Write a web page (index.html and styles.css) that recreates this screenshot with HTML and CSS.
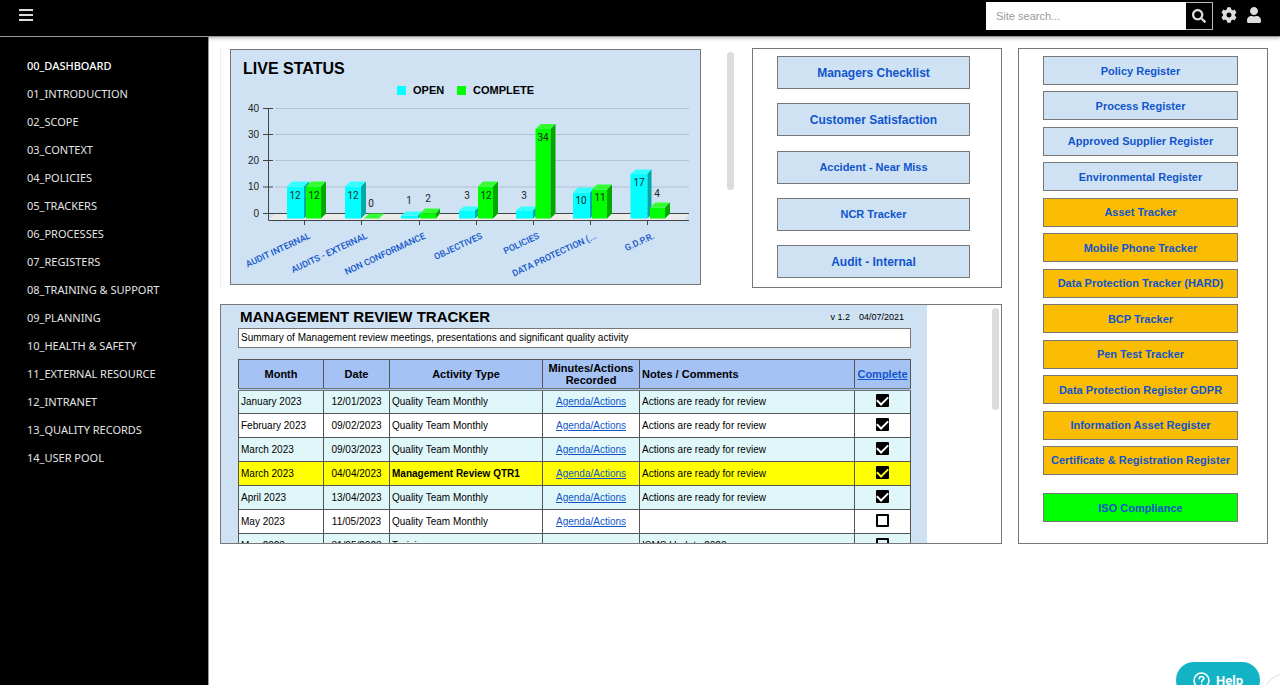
FILE: index.html
```html
<!DOCTYPE html>
<html lang="en">
<head>
<meta charset="utf-8">
<title>Dashboard</title>
<link rel="stylesheet" href="styles.css">
</head>
<body>
<header class="topbar">
  <button class="menu-btn" type="button" aria-label="Menu">
    <svg width="14" height="12" viewBox="0 0 14 12"><path d="M0 0h14v2H0zM0 5h14v2H0zM0 10h14v2H0z"/></svg>
  </button>
  <form class="search">
    <input class="search-input" type="search" placeholder="Site search..." aria-label="Site search">
    <button class="search-btn" type="button" aria-label="Search">
      <svg width="14" height="14" viewBox="0 0 512 512"><path d="M505 442.700 405.300 343c-4.500-4.500-10.600-7-17-7H372c27.600-35.300 44-79.700 44-128C416 93.100 322.900 0 208 0S0 93.100 0 208s93.100 208 208 208c48.300 0 92.700-16.400 128-44v16.300c0 6.400 2.500 12.500 7 17l99.700 99.700c9.400 9.400 24.600 9.400 33.900 0l28.300-28.300c9.400-9.400 9.400-24.600.1-34zM208 336c-70.700 0-128-57.200-128-128 0-70.700 57.200-128 128-128 70.700 0 128 57.200 128 128 0 70.700-57.200 128-128 128z"/></svg>
    </button>
  </form>
  <button class="icon-btn" type="button" aria-label="Settings">
    <svg width="16" height="16" viewBox="0 0 512 512"><path d="M487.400 315.700l-42.600-24.600c4.300-23.200 4.300-47 0-70.200l42.600-24.600c4.900-2.800 7.100-8.600 5.500-14-11.100-35.600-30-67.800-54.700-94.600-3.800-4.100-10-5.100-14.800-2.300L380.800 110c-17.900-15.400-38.500-27.300-60.800-35.100V25.800c0-5.600-3.900-10.500-9.400-11.700-36.700-8.200-74.300-7.800-109.200 0-5.500 1.200-9.400 6.100-9.400 11.700V75c-22.200 7.900-42.800 19.800-60.800 35.100L88.700 85.500c-4.900-2.800-11-1.900-14.800 2.300-24.700 26.700-43.600 58.900-54.700 94.600-1.700 5.400.6 11.200 5.500 14L67.300 221c-4.300 23.200-4.300 47 0 70.200l-42.600 24.600c-4.900 2.800-7.100 8.600-5.500 14 11.100 35.600 30 67.800 54.700 94.600 3.800 4.100 10 5.100 14.800 2.300l42.600-24.600c17.900 15.400 38.500 27.300 60.800 35.100v49.200c0 5.600 3.900 10.500 9.400 11.700 36.700 8.200 74.300 7.800 109.200 0 5.500-1.200 9.400-6.100 9.400-11.700v-49.200c22.200-7.900 42.800-19.800 60.800-35.100l42.600 24.600c4.900 2.800 11 1.900 14.800-2.300 24.700-26.700 43.600-58.900 54.700-94.600 1.500-5.500-.7-11.300-5.600-14.100zM256 336c-44.100 0-80-35.900-80-80s35.900-80 80-80 80 35.900 80 80-35.900 80-80 80z"/></svg>
  </button>
  <button class="icon-btn" type="button" aria-label="Account">
    <svg width="14" height="16" viewBox="0 0 448 512"><path d="M224 256c70.700 0 128-57.300 128-128S294.700 0 224 0 96 57.300 96 128s57.300 128 128 128zm89.600 32h-16.700c-22.200 10.200-46.900 16-72.900 16s-50.600-5.800-72.900-16h-16.700C60.200 288 0 348.200 0 422.400V464c0 26.500 21.500 48 48 48h352c26.500 0 48-21.500 48-48v-41.600c0-74.200-60.200-134.400-134.400-134.400z"/></svg>
  </button>
</header>

<div class="page">
  <nav class="sidebar">
    <a class="nav-link active" href="#">00_DASHBOARD</a>
    <a class="nav-link" href="#">01_INTRODUCTION</a>
    <a class="nav-link" href="#">02_SCOPE</a>
    <a class="nav-link" href="#">03_CONTEXT</a>
    <a class="nav-link" href="#">04_POLICIES</a>
    <a class="nav-link" href="#">05_TRACKERS</a>
    <a class="nav-link" href="#">06_PROCESSES</a>
    <a class="nav-link" href="#">07_REGISTERS</a>
    <a class="nav-link" href="#">08_TRAINING &amp; SUPPORT</a>
    <a class="nav-link" href="#">09_PLANNING</a>
    <a class="nav-link" href="#">10_HEALTH &amp; SAFETY</a>
    <a class="nav-link" href="#">11_EXTERNAL RESOURCE</a>
    <a class="nav-link" href="#">12_INTRANET</a>
    <a class="nav-link" href="#">13_QUALITY RECORDS</a>
    <a class="nav-link" href="#">14_USER POOL</a>
  </nav>

  <main class="main">
    <div class="board">
      <div class="board-top">
        <section class="chart-frame" aria-label="Live status">
          <svg class="chart" viewBox="230 48 471 237">
            <rect class="chart-bg" x="230.5" y="49.500" width="470" height="235"/>
            <text class="chart-title" x="243" y="74">LIVE STATUS</text>
            <rect class="open" x="397" y="86" width="9" height="9"/>
            <text class="legend" x="413" y="94">OPEN</text>
            <rect class="done" x="457" y="86" width="9" height="9"/>
            <text class="legend" x="473" y="94">COMPLETE</text>

            <path class="grid-line" d="M275 108.500H689M275 134.500H689M275 160.500H689M275 187H689"/>
            <path class="floor" d="M269 220l7-6.500h413l-5 6.500z"/>
            <path class="axis" d="M268.500 108v112.500H689M263 108.500h10M263 134.500h10M263 160.500h10M263 187h10M263 213.500H689"/>
            <path class="axis" d="M304.500 220v5M361.500 220v5M419.500 220v5M476.500 220v5M533.500 220v5M590.500 220v5M647.500 220v5"/>
            <g class="scale">
              <text x="259" y="112">40</text><text x="259" y="138">30</text><text x="259" y="164">20</text><text x="259" y="190">10</text><text x="259" y="217">0</text>
            </g>

            <g transform="translate(287 218.500)"><path class="open" d="M0 0v-32h17V0z"/><path class="open-top" d="M0-32l5-5h17l-5 5z"/><path class="open-side" d="M17-32l5-5v32l-5 5z"/></g>
            <g transform="translate(306 218.500)"><path class="done" d="M0 0v-32h15V0z"/><path class="done-top" d="M0-32l5-5h15l-5 5z"/><path class="done-side" d="M15-32l5-5v32l-5 5z"/></g>
            <g transform="translate(345 218.500)"><path class="open" d="M0 0v-32h16V0z"/><path class="open-top" d="M0-32l5-5h16l-5 5z"/><path class="open-side" d="M16-32l5-5v32l-5 5z"/></g>
            <g transform="translate(364 218.500)"><path class="done-top" d="M0 0l5-5h15l-5 5z"/></g>
            <g transform="translate(401 218.500)"><path class="open" d="M0 0v-3h17V0z"/><path class="open-top" d="M0-3l5-4h17l-5 4z"/><path class="open-side" d="M17-3l5-4v3l-5 4z"/></g>
            <g transform="translate(420 218.500)"><path class="done" d="M0 0v-5h16V0z"/><path class="done-top" d="M0-5l5-5h15l-4 5z"/><path class="done-side" d="M16-5l4-5v5l-4 5z"/></g>
            <g transform="translate(459 218.500)"><path class="open" d="M0 0v-8h16V0z"/><path class="open-top" d="M0-8l5-4h16l-5 4z"/><path class="open-side" d="M16-8l5-4v8l-5 4z"/></g>
            <g transform="translate(478 218.500)"><path class="done" d="M0 0v-32h15V0z"/><path class="done-top" d="M0-32l5-5h15l-5 5z"/><path class="done-side" d="M15-32l5-5v32l-5 5z"/></g>
            <g transform="translate(516 218.500)"><path class="open" d="M0 0v-8h17V0z"/><path class="open-top" d="M0-8l5-4h17l-5 4z"/><path class="open-side" d="M17-8l5-4v8l-5 4z"/></g>
            <g transform="translate(535.500 218.500)"><path class="done" d="M0 0v-89.500h15V0z"/><path class="done-top" d="M0-89.500l5-5h15l-5 5z"/><path class="done-side" d="M15-89.500l5-5v89.500l-5 5z"/></g>
            <g transform="translate(573 218.500)"><path class="open" d="M0 0v-26h17V0z"/><path class="open-top" d="M0-26l5-5h17l-5 5z"/><path class="open-side" d="M17-26l5-5v26l-5 5z"/></g>
            <g transform="translate(592 218.500)"><path class="done" d="M0 0v-29h15V0z"/><path class="done-top" d="M0-29l5-5h15l-5 5z"/><path class="done-side" d="M15-29l5-5v29l-5 5z"/></g>
            <g transform="translate(630.500 218.500)"><path class="open" d="M0 0v-44.500h17V0z"/><path class="open-top" d="M0-44.500l5-4.500h17l-5 4.500z"/><path class="open-side" d="M17-44.500l4-4.500v44.500l-4 4.500z"/></g>
            <g transform="translate(650 218.500)"><path class="done" d="M0 0v-11h15V0z"/><path class="done-top" d="M0-11l5-5h15l-5 5z"/><path class="done-side" d="M15-11l5-5v11l-5 5z"/></g>

            <g class="value">
              <text x="295" y="199">12</text><text x="314" y="199">12</text>
              <text x="353" y="199">12</text><text x="371" y="207">0</text>
              <text x="409" y="204">1</text><text x="428" y="202">2</text>
              <text x="467" y="199">3</text><text x="486" y="199">12</text>
              <text x="524" y="199">3</text><text x="543" y="141">34</text>
              <text x="581" y="204">10</text><text x="600" y="201">11</text>
              <text x="639" y="186">17</text><text x="657" y="197">4</text>
            </g>
            <g class="category">
              <text transform="translate(311 238) rotate(-25)">AUDIT INTERNAL</text>
              <text transform="translate(368 238) rotate(-25)">AUDITS - EXTERNAL</text>
              <text transform="translate(426 238) rotate(-25)">NON CONFORMANCE</text>
              <text transform="translate(483 238) rotate(-25)">OBJECTIVES</text>
              <text transform="translate(540 238) rotate(-25)">POLICIES</text>
              <text transform="translate(597 238) rotate(-25)">DATA PROTECTION (...</text>
              <text transform="translate(655 238) rotate(-25)">G.D.P.R.</text>
            </g>
          </svg>
          <div class="thumb thumb-tall"></div>
        </section>

        <section class="panel quick-panel">
          <button class="tile tall large" type="button">Managers Checklist</button>
          <button class="tile tall large" type="button">Customer Satisfaction</button>
          <button class="tile tall" type="button">Accident - Near Miss</button>
          <button class="tile tall" type="button">NCR Tracker</button>
          <button class="tile tall large" type="button">Audit - Internal</button>
        </section>
      </div>

      <section class="panel tracker">
        <div class="sheet">
          <div class="sheet-head">
            <h2 class="sheet-title">MANAGEMENT REVIEW TRACKER</h2>
            <span>v 1.2</span>
            <span>04/07/2021</span>
          </div>
          <p class="summary">Summary of Management review meetings, presentations and significant quality activity</p>
          <table class="reviews">
            <colgroup><col class="c-month"><col class="c-date"><col class="c-activity"><col class="c-minutes"><col><col class="c-done"></colgroup>
            <thead>
              <tr><th>Month</th><th>Date</th><th>Activity Type</th><th>Minutes/Actions Recorded</th><th class="left">Notes / Comments</th><th><a href="#">Complete</a></th></tr>
            </thead>
            <tbody>
              <tr class="tint"><td>January 2023</td><td class="mid">12/01/2023</td><td>Quality Team Monthly</td><td class="mid"><a href="#">Agenda/Actions</a></td><td>Actions are ready for review</td><td class="mid"><input class="tick" type="checkbox" aria-label="January 2023 complete" checked></td></tr>
              <tr><td>February 2023</td><td class="mid">09/02/2023</td><td>Quality Team Monthly</td><td class="mid"><a href="#">Agenda/Actions</a></td><td>Actions are ready for review</td><td class="mid"><input class="tick" type="checkbox" aria-label="February 2023 complete" checked></td></tr>
              <tr class="tint"><td>March 2023</td><td class="mid">09/03/2023</td><td>Quality Team Monthly</td><td class="mid"><a href="#">Agenda/Actions</a></td><td>Actions are ready for review</td><td class="mid"><input class="tick" type="checkbox" aria-label="March 2023 complete" checked></td></tr>
              <tr class="flag"><td>March 2023</td><td class="mid">04/04/2023</td><td><strong>Management Review QTR1</strong></td><td class="mid"><a href="#">Agenda/Actions</a></td><td>Actions are ready for review</td><td class="mid"><input class="tick" type="checkbox" aria-label="Management Review QTR1 complete" checked></td></tr>
              <tr class="tint"><td>April 2023</td><td class="mid">13/04/2023</td><td>Quality Team Monthly</td><td class="mid"><a href="#">Agenda/Actions</a></td><td>Actions are ready for review</td><td class="mid"><input class="tick" type="checkbox" aria-label="April 2023 complete" checked></td></tr>
              <tr><td>May 2023</td><td class="mid">11/05/2023</td><td>Quality Team Monthly</td><td class="mid"><a href="#">Agenda/Actions</a></td><td></td><td class="mid"><input class="tick" type="checkbox" aria-label="May 2023 complete"></td></tr>
              <tr class="tint"><td>May 2023</td><td class="mid">31/05/2023</td><td>Training</td><td></td><td>ISMS Update 2023</td><td class="mid"><input class="tick" type="checkbox" aria-label="Training complete"></td></tr>
            </tbody>
          </table>
        </div>
        <div class="thumb thumb-short"></div>
      </section>
    </div>

    <aside class="panel registers">
      <div class="register-list">
        <button class="tile" type="button">Policy Register</button>
        <button class="tile" type="button">Process Register</button>
        <button class="tile" type="button">Approved Supplier Register</button>
        <button class="tile" type="button">Environmental Register</button>
        <button class="tile amber" type="button">Asset Tracker</button>
        <button class="tile amber" type="button">Mobile Phone Tracker</button>
        <button class="tile amber" type="button">Data Protection Tracker (HARD)</button>
        <button class="tile amber" type="button">BCP Tracker</button>
        <button class="tile amber" type="button">Pen Test Tracker</button>
        <button class="tile amber" type="button">Data Protection Register GDPR</button>
        <button class="tile amber" type="button">Information Asset Register</button>
        <button class="tile amber" type="button">Certificate &amp; Registration Register</button>
      </div>
      <button class="tile green" type="button">ISO Compliance</button>
    </aside>
  </main>
</div>

<div class="info-dot"></div>
<button class="help" type="button">
  <svg width="17" height="17" viewBox="0 0 17 17" fill="none" stroke="#fff" stroke-width="1.600" stroke-linecap="round"><circle cx="8.500" cy="8.500" r="7.500"/><path d="M6.300 6.700c0-3 4.500-2.900 4.500-.2 0 1.700-2.200 1.700-2.200 3.400"/><path d="M8.600 12.300v.1"/></svg>
  Help
</button>
</body>
</html>
```

FILE: styles.css
```css
* { box-sizing: border-box; }

body {
  margin: 0;
  min-height: 100vh;
  display: flex;
  flex-direction: column;
  background: #fff;
  color: #000;
  font-family: "Liberation Sans", Arial, sans-serif;
  font-size: 10px;
}

button { font-family: inherit; cursor: pointer; }
a { color: #1155cc; }

/* Top bar */
.topbar {
  position: relative;
  z-index: 1;
  display: flex;
  align-items: flex-start;
  padding: 2px 18px 6px;
  background: #000;
  border-bottom: 1px solid #999;
  box-shadow: 0 1px 4px rgba(0, 0, 0, 0.3);
}

.menu-btn,
.icon-btn {
  display: flex;
  align-items: center;
  justify-content: center;
  height: 26px;
  padding: 0;
  border: 0;
  background: none;
}

.menu-btn { width: 16px; margin-right: auto; }
.icon-btn { width: 16px; }
.icon-btn + .icon-btn { margin-left: 9px; }
.topbar svg { fill: #ddd; }

.search { display: flex; margin-right: 8px; }

.search-input {
  width: 200px;
  height: 28px;
  padding: 0 10px;
  border: 0;
  border-radius: 0;
  background: #fff;
  font-family: inherit;
  font-size: 11px;
  appearance: none;
}

.search-input::placeholder { color: #999; }

.search-btn {
  display: flex;
  align-items: center;
  justify-content: center;
  width: 27px;
  height: 28px;
  padding: 0;
  border: 1px solid #bbb;
  border-left: 0;
  background: #000;
}

/* Page frame */
.page { flex: 1; display: flex; }

.sidebar {
  flex: 0 0 209px;
  padding: 15px 0 15px 27px;
  background: #000;
  border-right: 1px solid #999;
}

.nav-link {
  display: block;
  color: #e4e4e4;
  font-family: "Noto Sans", sans-serif;
  font-size: 11px;
  line-height: 28px;
  text-decoration: none;
}

.nav-link.active { color: #fff; font-weight: 500; }

.main {
  flex: 1;
  min-width: 0;
  display: grid;
  grid-template-columns: minmax(0, 1fr) 250px;
  align-content: start;
  gap: 16px;
  padding: 11px 12px 12px 11px;
}

.board { display: grid; gap: 16px; align-content: start; }

.board-top {
  display: grid;
  grid-template-columns: minmax(0, 1fr) 250px;
  gap: 15px;
}

.panel { border: 1px solid #777; background: #fff; }

/* Chart */
.chart-frame {
  display: flex;
  align-items: flex-start;
  gap: 26px;
  padding: 0 3px 0 9px;
  border-left: 1px solid #eee;
}

.chart { flex: 1; min-width: 0; height: auto; display: block; }
.chart-bg { fill: #cfe2f3; stroke: #777; }
.chart-title { font-size: 16px; font-weight: bold; }
.legend { font-size: 11px; font-weight: bold; }
.grid-line { stroke: #b1c1d0; }
.axis { stroke: #444; fill: none; }
.floor { fill: #ebebeb; }
.scale { font-size: 10px; text-anchor: end; fill: #222; }
.value { font-family: Roboto, sans-serif; font-size: 10px; text-anchor: middle; fill: #222; }
.category { font-family: Roboto, sans-serif; font-size: 9px; font-weight: 500; text-anchor: end; fill: #1155cc; }
.open { fill: #00ffff; }
.open-top { fill: #33ffff; }
.open-side { fill: #00a8a8; }
.done { fill: #00ff00; }
.done-top { fill: #33ff33; }
.done-side { fill: #00a800; }

.thumb { flex: 0 0 7px; border-radius: 4px; background: #dadce0; }
.thumb-tall { height: 138px; margin-top: 4px; }
.thumb-short { height: 102px; margin: 3px 2px 0 auto; }

/* Link tiles */
.quick-panel {
  display: flex;
  flex-direction: column;
  justify-content: space-between;
  min-height: 240px;
  padding: 7px 31px 9px 24px;
}

.tile {
  height: 29px;
  padding: 0 4px;
  border: 1px solid #777;
  background: #cfe2f3;
  color: #1155cc;
  font-size: 11px;
  font-weight: bold;
  white-space: nowrap;
}

.tile.tall { height: 33px; }
.tile.large { font-size: 12px; }
.tile.amber { background: #fbbc04; }
.tile.green { background: #00ff00; }

.registers {
  display: flex;
  flex-direction: column;
  gap: 18px;
  padding: 7px 29px 21px 24px;
}

.register-list {
  flex: 1;
  display: flex;
  flex-direction: column;
  justify-content: space-between;
}

/* Review tracker */
.tracker {
  display: flex;
  align-items: flex-start;
  height: 240px;
  overflow: hidden;
}

.sheet {
  flex: 0 1 706px;
  padding: 0 16px 20px 17px;
  background: #cfe2f3;
}

.sheet-head {
  display: flex;
  align-items: center;
  gap: 9px;
  height: 23px;
  padding: 0 7px 0 2px;
  font-size: 9px;
}

.sheet-title { margin: 0 auto 0 0; font-size: 15px; }

.summary {
  margin: 0 0 11px;
  padding: 0 2px;
  border: 1px solid #777;
  background: #fff;
  line-height: 18px;
}

.reviews {
  width: 100%;
  border-collapse: collapse;
  table-layout: fixed;
}

.c-month { width: 85px; }
.c-date { width: 66px; }
.c-activity { width: 153px; }
.c-minutes { width: 97px; }
.c-done { width: 56px; }

.reviews th,
.reviews td { padding: 0 2px; border: 1px solid #555; }

.reviews th {
  height: 30px;
  background: #a4c2f4;
  font-size: 11px;
  line-height: 12px;
}

.reviews th.left { text-align: left; }
.reviews thead { border-bottom: 3px double #777; }

.reviews td { height: 24px; background: #fff; line-height: 12px; }
.reviews .mid { text-align: center; }
.reviews .tint td { background: #e0f7fa; }
.reviews .flag td { background: #ffff00; }

.tick {
  appearance: none;
  display: inline-grid;
  place-content: center;
  width: 13px;
  height: 13px;
  margin: 0 0 3px;
  border: 2px solid #000;
  border-radius: 1px;
  color: #fff;
  vertical-align: middle;
}

.tick:checked { background: #000; }
.flag .tick { color: #ffff00; }

.tick:checked::before {
  content: "";
  width: 9px;
  height: 5px;
  margin-bottom: 2px;
  border: solid currentColor;
  border-width: 0 0 2px 2px;
  transform: rotate(-45deg);
}

/* Floating help */
.help {
  position: fixed;
  right: 20px;
  bottom: -13px;
  display: flex;
  align-items: center;
  justify-content: center;
  gap: 6px;
  width: 84px;
  height: 36px;
  padding: 0;
  border: 0;
  border-radius: 18px;
  background: #12b3c4;
  color: #fff;
  font-family: Roboto, sans-serif;
  font-size: 13px;
  font-weight: bold;
}

.info-dot {
  position: fixed;
  right: -24px;
  bottom: -29px;
  width: 40px;
  height: 40px;
  border: 1px solid #ddd;
  border-radius: 50%;
}
```
